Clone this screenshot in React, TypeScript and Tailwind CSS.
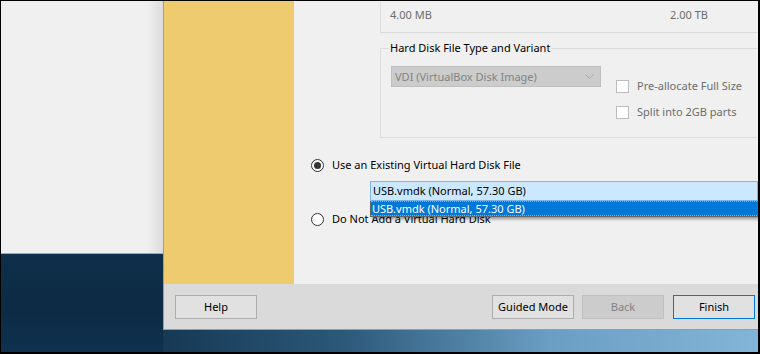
import React from "react";

function Radio({ checked }: { checked?: boolean }) {
  return (
    <div className="w-[13px] h-[13px] rounded-full border border-[#333333] bg-white flex items-center justify-center shrink-0">
      {checked && <div className="w-[7px] h-[7px] rounded-full bg-[#333333]" />}
    </div>
  );
}

function Check() {
  return <div className="w-[13px] h-[13px] border border-[#bcbcbc] bg-white shrink-0" />;
}

function Btn({ label, kind }: { label: string; kind?: "disabled" | "default" }) {
  const cls =
    kind === "disabled"
      ? "bg-[#cccccc] border-[#bfbfbf] text-[#838383]"
      : kind === "default"
      ? "bg-[#e1e1e1] border-[#0078d7] text-black"
      : "bg-[#e1e1e1] border-[#adadad] text-black";
  return (
    <div className={`w-[82px] h-[24px] border flex items-center justify-center ${cls}`}>
      {label}
    </div>
  );
}

export default function App() {
  return (
    <div className="w-[760px] h-[354px] bg-black pt-px pl-px pr-[2px] pb-[2px] flex font-['Noto_Sans',sans-serif] text-[11px] leading-[16px] overflow-hidden">
      {/* background window + desktop */}
      <div className="w-[162px] flex flex-col">
        <div className="h-[253px] border-b border-[#a8a8a8] bg-[linear-gradient(to_right,#f0f0f0_0px,#f0f0f0_146px,#dcdcdc_162px)]" />
        <div className="flex-1 bg-[linear-gradient(180deg,#0f2f4a_0%,#0c2a43_55%,#0f314f_100%)]" />
      </div>
      <div className="flex-1 flex flex-col min-w-0">
        {/* dialog */}
        <div className="h-[329px] border-l border-b border-[#9c9c9c] flex flex-col">
          <div className="h-[283px] flex">
            <div className="w-[130px] bg-[#eecb6f]" />
            <div className="flex-1 bg-[#f0f0f0] relative min-w-0">
              {/* group 1 */}
              <div className="ml-[86px] h-[32px] border-l border-b border-[#dcdcdc] flex pl-[9px] pt-[6px] text-[#6d6d6d]">
                <span className="w-[280px]">4.00 MB</span>
                <span>2.00 TB</span>
              </div>
              {/* group 2 */}
              <div className="ml-[86px] mt-[15px] h-[90px] border-l border-t border-b border-[#dcdcdc] relative flex pl-[10px]">
                <div className="absolute left-[8px] -top-[9px] px-px bg-[#f0f0f0] text-black">
                  Hard Disk File Type and Variant
                </div>
                <div className="mt-[17px] w-[210px] h-[21px] bg-[#cccccc] border border-[#bfbfbf] flex items-center justify-between pl-[3px] pr-[6px] text-[#838383]">
                  <span>VDI (VirtualBox Disk Image)</span>
                  <svg width="9" height="5" viewBox="0 0 9 5">
                    <path d="M0.5 0.5 L4.5 4.5 L8.5 0.5" fill="none" stroke="#a9a9a9" strokeWidth="1" />
                  </svg>
                </div>
                <div className="ml-[15px] mt-[29px] flex flex-col gap-[10px] text-[#6d6d6d]">
                  <div className="flex items-center gap-[8px]">
                    <Check />
                    <span>Pre-allocate Full Size</span>
                  </div>
                  <div className="flex items-center gap-[8px]">
                    <Check />
                    <span>Split into 2GB parts</span>
                  </div>
                </div>
              </div>
              {/* radios */}
              <div className="ml-[17px] mt-[19px] flex items-center gap-[8px] text-black">
                <Radio checked />
                <span>Use an Existing Virtual Hard Disk File</span>
              </div>
              <div className="ml-[17px] mt-[38px] flex items-center gap-[8px] text-black">
                <Radio />
                <span>Do Not Add a Virtual Hard Disk</span>
              </div>
              {/* open combobox overlay */}
              <div className="absolute left-[76px] top-[180px] right-0">
                <div className="h-[20px] border border-[#7eb4ea] bg-[#cce8ff] pl-[2px] flex items-center text-black">
                  USB.vmdk (Normal, 57.30 GB)
                </div>
                <div className="border-x border-b border-[#646464] shadow-[2px_2px_3px_rgba(0,0,0,0.4)]">
                  <div className="h-[15px] bg-[#0078d7] text-white border-y border-dotted border-[#c8a070] pl-[1px] flex items-center">
                    USB.vmdk (Normal, 57.30 GB)
                  </div>
                </div>
              </div>
            </div>
          </div>
          {/* footer */}
          <div className="flex-1 bg-[#dadada] flex items-start pt-[11px] pl-[11px] pr-[3px]">
            <Btn label="Help" />
            <div className="ml-auto flex">
              <Btn label="Guided Mode" />
              <div className="ml-[8px]">
                <Btn label="Back" kind="disabled" />
              </div>
              <div className="ml-[9px]">
                <Btn label="Finish" kind="default" />
              </div>
            </div>
          </div>
        </div>
        <div className="flex-1 bg-[linear-gradient(to_right,#163955_0%,#2b5879_30%,#6a9ec3_65%,#82b5d7_100%)]" />
      </div>
    </div>
  );
}
